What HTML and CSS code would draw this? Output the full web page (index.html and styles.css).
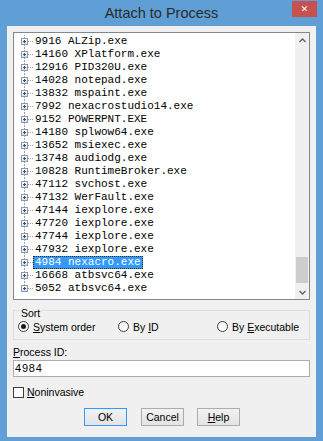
FILE: index.html
```html
<!DOCTYPE html>
<html lang="en">
<head>
    <meta charset="UTF-8">
    <title>Attach to Process</title>
    <link rel="stylesheet" href="styles.css">
</head>
<body>
<div class="window">
    <div class="titlebar">
        <span class="title">Attach to Process</span>
        <span class="close">&#x2715;</span>
    </div>
    <div class="client">
        <div class="list">
            <div class="rows">
                <div class="row"><span class="exp"></span><span class="dash"></span><span class="name">9916 ALZip.exe</span></div>
                <div class="row"><span class="exp"></span><span class="dash"></span><span class="name">14160 XPlatform.exe</span></div>
                <div class="row"><span class="exp"></span><span class="dash"></span><span class="name">12916 PID320U.exe</span></div>
                <div class="row"><span class="exp"></span><span class="dash"></span><span class="name">14028 notepad.exe</span></div>
                <div class="row"><span class="exp"></span><span class="dash"></span><span class="name">13832 mspaint.exe</span></div>
                <div class="row"><span class="exp"></span><span class="dash"></span><span class="name">7992 nexacrostudio14.exe</span></div>
                <div class="row"><span class="exp"></span><span class="dash"></span><span class="name">9152 POWERPNT.EXE</span></div>
                <div class="row"><span class="exp"></span><span class="dash"></span><span class="name">14180 splwow64.exe</span></div>
                <div class="row"><span class="exp"></span><span class="dash"></span><span class="name">13652 msiexec.exe</span></div>
                <div class="row"><span class="exp"></span><span class="dash"></span><span class="name">13748 audiodg.exe</span></div>
                <div class="row"><span class="exp"></span><span class="dash"></span><span class="name">10828 RuntimeBroker.exe</span></div>
                <div class="row"><span class="exp"></span><span class="dash"></span><span class="name">47112 svchost.exe</span></div>
                <div class="row"><span class="exp"></span><span class="dash"></span><span class="name">47132 WerFault.exe</span></div>
                <div class="row"><span class="exp"></span><span class="dash"></span><span class="name">47144 iexplore.exe</span></div>
                <div class="row"><span class="exp"></span><span class="dash"></span><span class="name">47720 iexplore.exe</span></div>
                <div class="row"><span class="exp"></span><span class="dash"></span><span class="name">47744 iexplore.exe</span></div>
                <div class="row"><span class="exp"></span><span class="dash"></span><span class="name">47932 iexplore.exe</span></div>
                <div class="row"><span class="exp"></span><span class="dash"></span><span class="name selected">4984 nexacro.exe</span></div>
                <div class="row"><span class="exp"></span><span class="dash"></span><span class="name">16668 atbsvc64.exe</span></div>
                <div class="row last"><span class="exp"></span><span class="dash"></span><span class="name">5052 atbsvc64.exe</span></div>
            </div>
            <div class="scrollbar">
                <div class="arrow">
                    <svg width="7" height="5" viewBox="0 0 7 5"><path d="M0.5 4 L3.5 1 L6.5 4" fill="none" stroke="#606060" stroke-width="1.4"/></svg>
                </div>
                <div class="track-before"></div>
                <div class="thumb"></div>
                <div class="track-after"></div>
                <div class="arrow">
                    <svg width="7" height="5" viewBox="0 0 7 5"><path d="M0.5 1 L3.5 4 L6.5 1" fill="none" stroke="#606060" stroke-width="1.4"/></svg>
                </div>
            </div>
        </div>

        <div class="group">
            <span class="caption">Sort</span>
            <div class="radios">
                <label class="option"><span class="radio checked"></span><span><u>S</u>ystem order</span></label>
                <label class="option"><span class="radio"></span><span>By <u>I</u>D</span></label>
                <label class="option"><span class="radio"></span><span>By <u>E</u>xecutable</span></label>
            </div>
        </div>

        <div class="field-label"><u>P</u>rocess ID:</div>
        <div class="input">4984</div>

        <label class="check-row"><span class="checkbox"></span><span><u>N</u>oninvasive</span></label>

        <div class="buttons">
            <span class="btn default">OK</span>
            <span class="btn">Cancel</span>
            <span class="btn"><span><u>H</u>elp</span></span>
        </div>
    </div>
</div>
</body>
</html>
```
FILE: styles.css
```css
body {
    margin: 0;
    background: #609fd6;
}
.window {
    width: 323px;
    height: 441px;
    background: #609fd6;
    font-family: "Liberation Sans Narrow", "Liberation Sans", Arial, sans-serif;
    font-size: 10.5px;
    color: #000;
}
.titlebar {
    position: relative;
    height: 26px;
    display: flex;
    align-items: center;
    justify-content: center;
}
.title {
    font-size: 14.5px;
    color: #2a2a2a;
    margin-top: -1px;
}
.close {
    position: absolute;
    top: 1px;
    right: 6px;
    width: 25px;
    height: 16px;
    background: #c75050;
    color: #fff;
    font-family: "DejaVu Sans", sans-serif;
    font-size: 9px;
    font-weight: bold;
    display: flex;
    align-items: center;
    justify-content: center;
}
.client {
    margin: 0 7px;
    height: 411px;
    background: #f0f0f0;
    padding-top: 6px;
    box-sizing: border-box;
}

/* process tree */
.list {
    margin: 0 6px;
    height: 268px;
    border: 1px solid #828790;
    background: #fff;
    display: flex;
    box-sizing: border-box;
}
.rows {
    flex: 1;
    padding-top: 2px;
    font-family: "Liberation Mono", "Courier New", monospace;
    font-size: 11px;
}
.row {
    height: 13px;
    display: flex;
    align-items: center;
    background: repeating-linear-gradient(to bottom, #a0a0a0 0 1px, transparent 1px 2px) 10px 0 / 1px 100% no-repeat;
}
.row.last {
    background-size: 1px 50%;
}
.exp {
    position: relative;
    width: 7px;
    height: 7px;
    margin-left: 7px;
    border: 1px solid #8e9aa8;
    background: linear-gradient(#ffffff, #d8dde4);
    box-sizing: border-box;
}
.exp::before,
.exp::after {
    content: "";
    position: absolute;
    background: #2c4f86;
}
.exp::before {
    left: 1px;
    top: 2px;
    width: 3px;
    height: 1px;
}
.exp::after {
    left: 2px;
    top: 1px;
    width: 1px;
    height: 3px;
}
.dash {
    width: 5px;
    border-top: 1px dotted #a0a0a0;
}
.name {
    padding: 0 1px;
    line-height: 11px;
    border: 1px solid transparent;
    white-space: nowrap;
}
.name.selected {
    background: #3399ff;
    color: #fff;
    border: 1px dotted #3a2a10;
}
.scrollbar {
    width: 14px;
    background: #f0f0f0;
    display: flex;
    flex-direction: column;
}
.arrow {
    height: 14px;
    display: flex;
    align-items: center;
    justify-content: center;
}
.track-before {
    height: 210px;
}
.thumb {
    height: 26px;
    margin: 0 1px;
    background: #cdcdcd;
}
.track-after {
    flex: 1;
}

/* sort group */
.group {
    margin: 10px 6px 0;
    border: 1px solid #dcdcdc;
    height: 30px;
    box-sizing: border-box;
}
.caption {
    display: block;
    width: fit-content;
    margin: -4px 0 0 6px;
    padding: 0 1px;
    line-height: 12px;
    background: #f0f0f0;
}
.radios {
    display: grid;
    grid-template-columns: 100px 99px auto;
    padding-left: 4px;
    height: 13px;
    margin-top: 1px;
}
.option {
    display: flex;
    align-items: center;
    gap: 4px;
}
.radio {
    width: 11px;
    height: 11px;
    border: 1px solid #3c3c3c;
    border-radius: 50%;
    background: linear-gradient(#f4f4f4, #ffffff);
    box-sizing: border-box;
    display: flex;
    align-items: center;
    justify-content: center;
}
.radio.checked::after {
    content: "";
    width: 5px;
    height: 5px;
    border-radius: 50%;
    background: #1a1a1a;
}

/* process id */
.field-label {
    margin: 6px 6px 0;
    line-height: 12px;
}
.input {
    margin: 2px 6px 0;
    height: 17px;
    border: 1px solid #abadb3;
    background: #fff;
    box-sizing: border-box;
    padding-left: 1px;
    font-family: "Liberation Sans", Arial, sans-serif;
    font-size: 11px;
    letter-spacing: 0.8px;
    line-height: 15px;
}
.check-row {
    margin: 9px 6px 0;
    height: 12px;
    display: flex;
    align-items: center;
    gap: 3px;
}
.checkbox {
    width: 11px;
    height: 11px;
    border: 1px solid #3c3c3c;
    background: #fff;
    box-sizing: border-box;
}

/* buttons */
.buttons {
    display: flex;
    gap: 13px;
    margin: 10px 0 0 77px;
}
.btn {
    width: 43px;
    height: 18px;
    border: 1px solid #acacac;
    background: linear-gradient(#f2f2f2, #e3e3e3);
    box-sizing: border-box;
    display: flex;
    align-items: center;
    justify-content: center;
}
.btn.default {
    border-color: #3399ff;
    margin-right: 1px;
}
```
